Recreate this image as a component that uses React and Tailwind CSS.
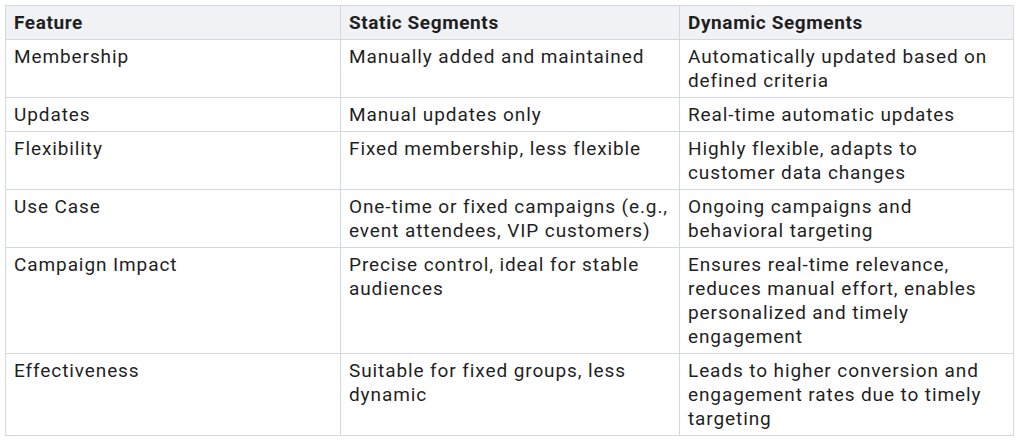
import React from "react";

const rows = [
  ["Membership", "Manually added and maintained", "Automatically updated based on defined criteria"],
  ["Updates", "Manual updates only", "Real-time automatic updates"],
  ["Flexibility", "Fixed membership, less flexible", "Highly flexible, adapts to customer data changes"],
  ["Use Case", "One-time or fixed campaigns (e.g., event attendees, VIP customers)", "Ongoing campaigns and behavioral targeting"],
  ["Campaign Impact", "Precise control, ideal for stable audiences", "Ensures real-time relevance, reduces manual effort, enables personalized and timely engagement"],
  ["Effectiveness", "Suitable for fixed groups, less dynamic", "Leads to higher conversion and engagement rates due to timely targeting"],
];

export default function App() {
  return (
    <div className="bg-white w-[1020px] h-[442px] pt-[5px] pl-[5px] font-['Roboto',sans-serif] text-[#1f1f1f]">
      <table className="border-collapse table-fixed w-[1008px] text-[19px] tracking-[0.9px] leading-6">
        <colgroup>
          <col className="w-[335px]" />
          <col className="w-[339px]" />
          <col className="w-[334px]" />
        </colgroup>
        <thead>
          <tr className="bg-[#f0f2f5]">
            {["Feature", "Static Segments", "Dynamic Segments"].map((h) => (
              <th key={h} className="border border-[#d3d7df] pl-2 pr-1 pt-[5px] pb-[4px] text-left font-bold tracking-[0.6px] align-top">
                {h}
              </th>
            ))}
          </tr>
        </thead>
        <tbody>
          {rows.map((r) => (
            <tr key={r[0]}>
              {r.map((c, i) => (
                <td key={i} className="border border-[#d3d7df] pl-2 pr-1 pt-[5px] pb-[4px] align-top">
                  {c}
                </td>
              ))}
            </tr>
          ))}
        </tbody>
      </table>
    </div>
  );
}
